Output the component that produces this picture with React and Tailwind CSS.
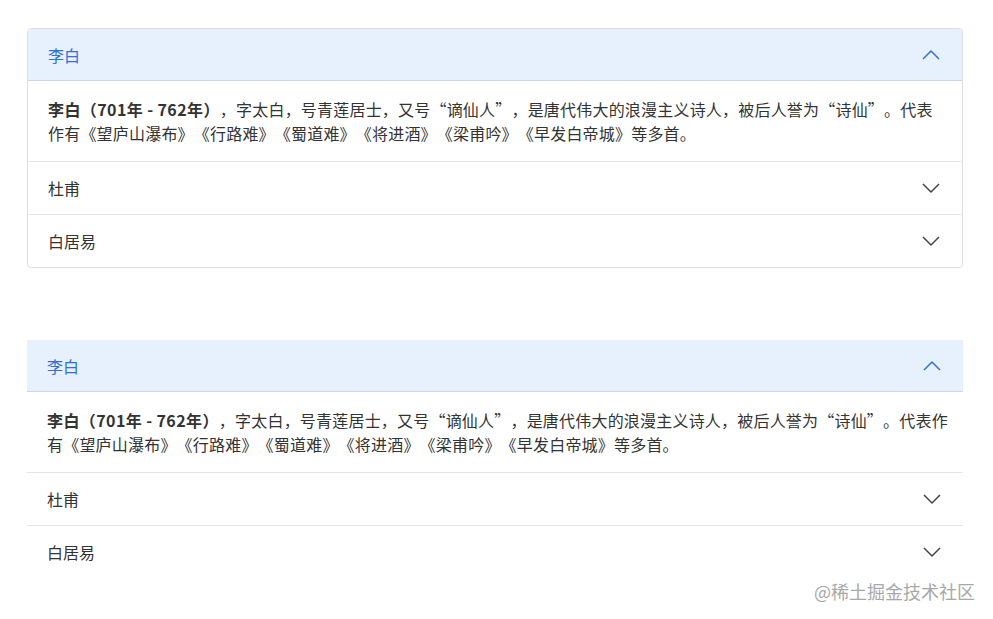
import React, { useState } from 'react';

const poets = [
  {
    key: 'libai',
    title: '李白',
    lead: '李白（701年 - 762年）',
    body: '，字太白，号青莲居士，又号“谪仙人”，是唐代伟大的浪漫主义诗人，被后人誉为“诗仙”。代表作有《望庐山瀑布》《行路难》《蜀道难》《将进酒》《梁甫吟》《早发白帝城》等多首。',
  },
  { key: 'dufu', title: '杜甫', lead: '杜甫（712年 - 770年）', body: '，字子美，自号少陵野老，唐代伟大的现实主义诗人。' },
  { key: 'bai', title: '白居易', lead: '白居易（772年 - 846年）', body: '，字乐天，号香山居士，唐代伟大的现实主义诗人。' },
];

const Chevron = ({ up }) => (
  <svg width="18" height="10" viewBox="0 0 18 10" fill="none" className={up ? 'text-[#2f6fd6]' : 'text-[#444]'}>
    <polyline
      points={up ? '1,9 9,1 17,9' : '1,1 9,9 17,1'}
      stroke="currentColor"
      strokeWidth="1.5"
      strokeLinejoin="round"
    />
  </svg>
);

const Accordion = ({ bordered }) => {
  const [open, setOpen] = useState('libai');

  return (
    <div className={bordered ? 'border border-[#dcdfe6] rounded-[4px] overflow-hidden' : ''}>
      {poets.map((p, i) => {
        const active = open === p.key;
        const last = i === poets.length - 1;
        return (
          <div key={p.key} className={!last || active ? 'border-b border-[#e4e6eb]' : ''}>
            <button
              onClick={() => setOpen(active ? null : p.key)}
              className={`w-full h-[52px] flex items-center justify-between pl-[20px] pr-[22px] text-left text-[16px] ${
                active ? 'bg-[#e7f0fd] text-[#2f6fd6] border-b border-[#cbd6e6]' : 'text-[#333]'
              }`}
            >
              <span>{p.title}</span>
              <Chevron up={active} />
            </button>
            {active && (
              <div
                className={`pl-[20px] py-[16px] text-[16px] leading-[24px] tracking-[0.2px] text-[#333] ${
                  bordered ? 'pr-[20px]' : 'pr-[14px]'
                }`}
              >
                <b className="font-bold tracking-[0.4px]">{p.lead}</b>
                {p.body}
              </div>
            )}
          </div>
        );
      })}
    </div>
  );
};

export default function App() {
  return (
    <div
      className="relative min-h-[619px] bg-white pl-[27px] pr-[30px] pt-[28px] [text-spacing-trim:space-all]"
      style={{ fontFamily: '"Noto Sans CJK SC", "Liberation Sans", sans-serif' }}
    >
      <Accordion bordered />
      <div className="mt-[72px]">
        <Accordion />
      </div>
      <div className="absolute right-[18px] top-[578px] text-[18px] text-[#a8a8a8]">@稀土掘金技术社区</div>
    </div>
  );
}
